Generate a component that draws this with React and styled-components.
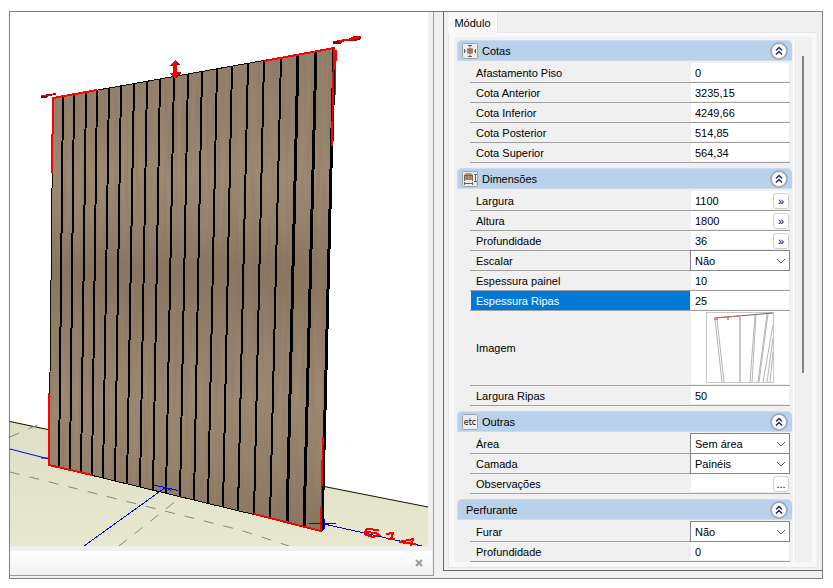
import React, { useState } from 'react';
import styled, { createGlobalStyle } from 'styled-components';

const GlobalStyle = createGlobalStyle`
  * {
    box-sizing: border-box;
  }

  body {
    margin: 0;
    background: #fff;
    color: #000;
    font-family: "Liberation Sans", Arial, sans-serif;
    font-size: 11px;
    line-height: 16px;
  }

  button, input, select {
    font: inherit;
    color: inherit;
  }
`;

const Page = styled.div`
  min-height: 100vh;
  padding: 11px 10px 9px 9px;
  display: flex;
`;

const Window = styled.div`
  flex: 1;
  display: flex;
  background: #f0f0f0;
  border: 1px solid #7f7f7f;
`;

const ViewPane = styled.section`
  flex: 1;
  min-width: 0;
  margin-bottom: 2px;
  display: flex;
  flex-direction: column;
  border-right: 1px solid #9c9c9c;
  border-bottom: 1px solid #9c9c9c;
`;

const Scene = styled.svg`
  display: block;
  flex: 1;
  width: 100%;
  height: 0;
  padding-right: 5px;
`;

const StatusBar = styled.div`
  height: 24px;
  margin: 5px 1px 0 0;
  padding-right: 4px;
  display: flex;
  align-items: center;
  justify-content: flex-end;
  background: linear-gradient(#fff, #f1f1f1);
`;

const CloseButton = styled.button`
  width: 18px;
  height: 18px;
  padding: 0;
  border: none;
  background: none;
  display: flex;
  align-items: center;
  justify-content: center;
`;

const SidePane = styled.aside`
  flex: 0 0 379px;
  margin: 0 0 7px 9px;
  padding: 0 4px 2px;
  display: flex;
  flex-direction: column;
  border-left: 1px solid #696969;
  border-bottom: 1px solid #696969;
`;

const TabBar = styled.div`
  display: flex;
  height: 20px;
`;

const Tab = styled.button`
  width: 50px;
  height: 21px;
  padding: 0;
  position: relative;
  border: none;
  border-right: 1px solid #e3e3e3;
  background: #f9f9f9;
`;

const TabPage = styled.div`
  flex: 1;
  padding: 4px 5px 5px;
  display: flex;
  background: #f9f9f9;
  border: 1px solid #e5e5e5;
`;

const Inner = styled.div`
  flex: 1;
  display: flex;
  background: #f0f0f0;
`;

const Groups = styled.div`
  flex: 1;
  margin-top: 2px;
  padding: 1px 1px 0 3px;
  display: flex;
  flex-direction: column;
  gap: 5px;
  border-right: 1px solid #fff;
`;

const ScrollTrack = styled.div`
  width: 18px;
  padding: 19px 8px 0;
`;

const ScrollThumb = styled.div`
  width: 2px;
  height: 317px;
  background: #858585;
`;

const GroupHeader = styled.h2`
  height: 21px;
  margin: 0 0 2px;
  padding: 0 4px 0 ${({ $plain }) => ($plain ? '8px' : '4px')};
  display: flex;
  align-items: center;
  gap: 4px;
  border: 1px solid #cbdcf0;
  border-right: none;
  border-radius: 5px 5px 0 0;
  background: #b9d1ea;
  font-size: 11px;
  font-weight: 400;
`;

const GroupTitle = styled.span`
  flex: 1;
`;

const GroupIcon = styled.svg`
  flex: none;
  width: 16px;
  height: 16px;
`;

const CollapseButton = styled.button`
  width: 18px;
  height: 18px;
  padding: 0;
  display: flex;
  align-items: center;
  justify-content: center;
  border: 2px solid #a3abc0;
  border-radius: 50%;
  background: #fff;
`;

const Rows = styled.div`
  padding: 0 2px 0 13px;
`;

const Row = styled.div`
  height: ${({ $tall }) => ($tall ? '75px' : '20px')};
  display: flex;
  border-bottom: 1px solid #a0a0a0;
`;

const Label = styled.label`
  flex: 1;
  margin-left: 1px;
  padding: ${({ $tall }) => ($tall ? '0' : '2px')} 0 0 5px;
  display: flex;
  align-items: ${({ $tall }) => ($tall ? 'center' : 'flex-start')};
  background: ${({ $selected }) => ($selected ? '#0078d7' : 'transparent')};
  color: ${({ $selected }) => ($selected ? '#fff' : '#000')};
`;

const Cell = styled.div`
  flex: 0 0 98px;
  min-width: 0;
  margin: 0 1px 1px;
  display: flex;
  justify-content: center;
  background: #fff;
`;

const TextBox = styled.input`
  flex: 1;
  width: 100%;
  min-width: 0;
  padding: 1px 4px 0;
  border: none;
  outline: none;
  background: transparent;
`;

const MoreButton = styled.button`
  flex: none;
  width: 16px;
  height: 16px;
  margin: 1px 0 0;
  padding: 0;
  align-self: center;
  border: 1px solid #d0d0d0;
  border-radius: 3px;
  background: #fdfdfd;
  line-height: 12px;
`;

const SelectBox = styled.div`
  flex: 0 0 100px;
  height: 21px;
  margin-top: -1px;
  display: grid;
  align-items: center;
  border: 1px solid #858585;
  background: #fff;

  & > * {
    grid-area: 1 / 1;
  }

  & > svg {
    justify-self: end;
    margin-right: 3px;
    pointer-events: none;
  }
`;

const Select = styled.select`
  width: 100%;
  height: 19px;
  padding: 0 4px;
  appearance: none;
  border: none;
  outline: none;
  background: transparent;
`;

const Thumbnail = styled.svg`
  width: 69px;
  height: 72px;
  margin-top: 1px;
`;

// x of every groove on the top edge and on the bottom edge
const GROOVES = [
  [63, 59], [74, 70], [86, 81], [97, 92], [109, 103], [121, 115], [134, 127],
  [147, 140], [160, 153], [174, 166], [188, 180], [202, 194], [217, 208],
  [232, 223], [248, 238], [264, 254], [281, 270], [298, 287], [316, 304],
];

const topY = (x) => 98 - ((x - 53) * 50) / 281;
const bottomY = (x) => 465 + ((x - 49) * 66) / 273;

function PanelView() {
  return (
    <Scene viewBox="10 12 418 534" preserveAspectRatio="xMinYMin slice" role="img" aria-label="Painel ripado">
      <defs>
        <linearGradient id="floor" x1="0" y1="0" x2="0" y2="1">
          <stop offset="0" stopColor="#dedec5" />
          <stop offset="1" stopColor="#e8e8cf" />
        </linearGradient>
        <linearGradient id="wood" x1="0" y1="0" x2="0" y2="1">
          <stop offset="0" stopColor="#947f69" />
          <stop offset="0.16" stopColor="#98836c" />
          <stop offset="0.26" stopColor="#9f8a73" />
          <stop offset="0.36" stopColor="#98846d" />
          <stop offset="0.46" stopColor="#8a7660" />
          <stop offset="0.6" stopColor="#95806a" />
          <stop offset="0.72" stopColor="#9e8972" />
          <stop offset="0.86" stopColor="#98836c" />
          <stop offset="1" stopColor="#8a7660" />
        </linearGradient>
        <filter id="grain" x="0" y="0" width="100%" height="100%">
          <feTurbulence type="fractalNoise" baseFrequency="0.28 0.012" numOctaves="3" seed="4" />
          <feColorMatrix values="0 0 0 0 0.22  0 0 0 0 0.16  0 0 0 0 0.1  0.8 0 0 0 -0.3" />
          <feComposite operator="in" in2="SourceGraphic" />
        </filter>
      </defs>
      <rect x="10" y="12" width="418" height="534" fill="#fff" />
      <path d="M10 421L428 507V546H10Z" fill="url(#floor)" />
      <path d="M10 421.500L50 430M324 486.500L428 507" stroke="#161600" fill="none" />
      <path
        d="M10 472L240 530L289 546M10 437L42 423M119 546L181 497"
        stroke="#85857a"
        strokeDasharray="10 10"
        fill="none"
      />
      <path d="M10 449L49 459M41 458H49" stroke="#00f" fill="none" />
      <path d="M53 98L334 48L322 531L49 465Z" fill="url(#wood)" />
      <path d="M53 98L334 48L322 531L49 465Z" fill="#000" filter="url(#grain)" />
      <g stroke="#000" shapeRendering="crispEdges">
        {GROOVES.map(([x1, x2]) => (
          <line key={x1} x1={x1} y1={topY(x1)} x2={x2} y2={bottomY(x2)} strokeWidth={x1 > 290 ? 3 : 2} />
        ))}
      </g>
      <g fill="none" shapeRendering="crispEdges">
        <path d="M53 98L334 48M49 465L322 531M53 98L49 465" stroke="#0a0800" />
        <path d="M334 48L322 531" stroke="#000" strokeWidth="3" />
        <path d="M97 90L53 98L52 173M49 393V465L92 475M264 61L334 48L332 146M254 514L321 531L323 437" stroke="#f00" strokeWidth="2" />
        <path d="M335.500 50V61M335 61L334.500 97" stroke="#f00" strokeWidth="2" />
        <path d="M335 70L333 142M324 445L322 528" stroke="#000" />
      </g>
      <path d="M154 485L178 490.500M84 546L166 487L171 491M309 523.500H336M324 524L422 546M324 519V529" stroke="#00f" fill="none" shapeRendering="crispEdges" />
      <g shapeRendering="crispEdges">
        <path d="M175 60L181 65H177V72H181L175 79L169 73H173V66H169Z" fill="#f00" />
        <path d="M177 62L181 65H177M177 72L181 73L176 78Z" fill="#9c0000" />
        <path d="M41 95L50 94L56 93V95L48 96L47 98H41Z" fill="#900000" />
        <path d="M41 95H44L48 96L54 94" stroke="#f00" fill="none" />
        <path d="M333 41L348 39L354 36H361V39L355 41L345 41L340 44H333Z" fill="#900000" />
        <path d="M338 41L347 40L354 38L359 37" stroke="#f00" fill="none" strokeWidth="2" />
        <path
          d="M379 530L367 529L365 532L376 533L379 535L373 537L364 534M386 534L393 533L391 539M388 539H395M416 544L399 542L413 539L411 546"
          stroke="#f00"
          strokeWidth="2"
          fill="none"
        />
      </g>
    </Scene>
  );
}

function CollapseIcon() {
  return (
    <svg width="10" height="10" viewBox="0 0 10 10" fill="none" stroke="#1f2f66" strokeWidth="1.500">
      <path d="M2 4.500L5 1.500L8 4.500M2 8.500L5 5.500L8 8.500" />
    </svg>
  );
}

function IconFrame({ children }) {
  return (
    <GroupIcon viewBox="0 0 16 16" aria-hidden="true">
      <rect x="0.500" y="0.500" width="15" height="15" rx="1" fill="#ececec" stroke="#a2a2a2" />
      {children}
    </GroupIcon>
  );
}

const icons = {
  cotas: (
    <IconFrame>
      <path d="M5 6L8 4.500L11 6V10L8 11.500L5 10Z" fill="#a98a68" />
      <path d="M5 6L8 7L11 6M8 7V11" stroke="#8a6f54" fill="none" />
      <path d="M6 2.500H10M8 2.500V4M6 13.500H10M8 12V13.500M2.500 6V10M2.500 8H4M13.500 6V10M12 8H13.500" stroke="#59636b" fill="none" />
    </IconFrame>
  ),
  dimensoes: (
    <IconFrame>
      <path d="M2 4L4 2H9L11 4V9H2Z" fill="#b59775" />
      <path d="M2 4.500H11M2.500 4V10M5 5V9M8 5V9M10.500 4V10" stroke="#7d664f" fill="none" />
      <path d="M13.500 3V11M12 3.500H15M12 10.500H15M2.500 11V14M10.500 11V14M3 12.500H10" stroke="#59636b" fill="none" />
    </IconFrame>
  ),
  outras: (
    <IconFrame>
      <text x="8" y="11" textAnchor="middle" fontFamily="DejaVu Sans, sans-serif" fontSize="8">etc</text>
    </IconFrame>
  ),
};

function Group({ title, icon, children }) {
  const [open, setOpen] = useState(true);

  return (
    <section>
      <GroupHeader $plain={!icon}>
        {icon}
        <GroupTitle>{title}</GroupTitle>
        <CollapseButton aria-label={title} aria-expanded={open} onClick={() => setOpen(!open)}>
          <CollapseIcon />
        </CollapseButton>
      </GroupHeader>
      {open && <Rows>{children}</Rows>}
    </section>
  );
}

function TextRow({ id, label, value, more, selected }) {
  return (
    <Row>
      <Label htmlFor={id} $selected={selected}>{label}</Label>
      <Cell>
        <TextBox id={id} defaultValue={value} />
        {more && <MoreButton aria-label={`${label} opções`}>{more}</MoreButton>}
      </Cell>
    </Row>
  );
}

function SelectRow({ id, label, value }) {
  return (
    <Row>
      <Label htmlFor={id}>{label}</Label>
      <SelectBox>
        <Select id={id} defaultValue={value}>
          <option>{value}</option>
        </Select>
        <svg width="10" height="6" viewBox="0 0 10 6" fill="none" stroke="#555">
          <path d="M1 1L5 5L9 1" />
        </svg>
      </SelectBox>
    </Row>
  );
}

function ImageRow() {
  return (
    <Row $tall>
      <Label as="span" $tall>Imagem</Label>
      <Cell>
        <Thumbnail viewBox="0 0 69 72" role="img" aria-label="Imagem">
          <rect x="0.500" y="0.500" width="67" height="70" fill="#fff" stroke="#c8c8c8" />
          <path d="M9 7L16 70M11 7L18 70M49 3L44 70M50 3L46 70M61 2L52 70M62 2L53 70M67 13L57 70M67 26L61 70M67 40L64 70" stroke="#b5b5b5" fill="none" />
          <path d="M34 5V70" stroke="#c8c8c8" strokeWidth="2" />
          <path d="M9 6L67 1" stroke="#666" />
          <path d="M8 6L34 4" stroke="#c66" />
          <path d="M8 7H12M21 7H23" stroke="#f77" strokeWidth="2" />
        </Thumbnail>
      </Cell>
    </Row>
  );
}

export default function App() {
  return (
    <Page>
      <GlobalStyle />
      <Window>
        <ViewPane>
          <PanelView />
          <StatusBar>
            <CloseButton aria-label="Fechar">
              <svg width="8" height="8" viewBox="0 0 8 8" stroke="#9a9a9a" strokeWidth="2">
                <path d="M1 1L7 7M7 1L1 7" />
              </svg>
            </CloseButton>
          </StatusBar>
        </ViewPane>
        <SidePane>
          <TabBar role="tablist">
            <Tab role="tab" aria-selected="true">Módulo</Tab>
          </TabBar>
          <TabPage>
            <Inner>
              <Groups>
                <Group title="Cotas" icon={icons.cotas}>
                  <TextRow id="piso" label="Afastamento Piso" value="0" />
                  <TextRow id="anterior" label="Cota Anterior" value="3235,15" />
                  <TextRow id="inferior" label="Cota Inferior" value="4249,66" />
                  <TextRow id="posterior" label="Cota Posterior" value="514,85" />
                  <TextRow id="superior" label="Cota Superior" value="564,34" />
                </Group>
                <Group title="Dimensões" icon={icons.dimensoes}>
                  <TextRow id="largura" label="Largura" value="1100" more="»" />
                  <TextRow id="altura" label="Altura" value="1800" more="»" />
                  <TextRow id="profundidade" label="Profundidade" value="36" more="»" />
                  <SelectRow id="escalar" label="Escalar" value="Não" />
                  <TextRow id="painel" label="Espessura painel" value="10" />
                  <TextRow id="ripas" label="Espessura Ripas" value="25" selected />
                  <ImageRow />
                  <TextRow id="larguraRipas" label="Largura Ripas" value="50" />
                </Group>
                <Group title="Outras" icon={icons.outras}>
                  <SelectRow id="area" label="Área" value="Sem área" />
                  <SelectRow id="camada" label="Camada" value="Painéis" />
                  <TextRow id="observacoes" label="Observações" value="" more="..." />
                </Group>
                <Group title="Perfurante">
                  <SelectRow id="furar" label="Furar" value="Não" />
                  <TextRow id="furo" label="Profundidade" value="0" />
                </Group>
              </Groups>
              <ScrollTrack>
                <ScrollThumb />
              </ScrollTrack>
            </Inner>
          </TabPage>
        </SidePane>
      </Window>
    </Page>
  );
}
